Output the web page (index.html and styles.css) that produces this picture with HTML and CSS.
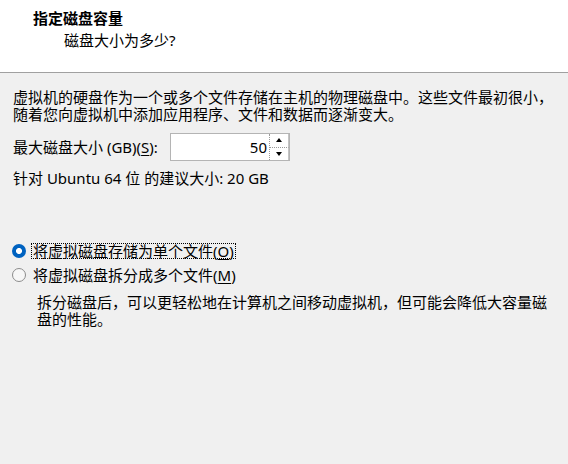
FILE: index.html
```html
<!DOCTYPE html>
<html lang="zh-CN">
<head>
<meta charset="utf-8">
<title>指定磁盘容量</title>
<link rel="stylesheet" href="styles.css">
</head>
<body>
<div class="header">
  <div class="title">指定磁盘容量</div>
  <div class="subtitle">磁盘大小为多少?</div>
</div>
<div class="content">
  <p class="intro">虚拟机的硬盘作为一个或多个文件存储在主机的物理磁盘中。这些文件最初很小，<br>随着您向虚拟机中添加应用程序、文件和数据而逐渐变大。</p>
  <div class="size-row">
    <label class="size-label">最大磁盘大小 (GB)(<u>S</u>):</label>
    <div class="spin">
      <span class="spin-value">50</span>
      <div class="spin-btns">
        <span class="spin-btn"><span class="arrow up"></span></span>
        <span class="spin-btn"><span class="arrow down"></span></span>
      </div>
    </div>
  </div>
  <p class="recommend">针对 Ubuntu 64 位 的建议大小: 20 GB</p>
  <div class="options">
    <div class="radio-row">
      <span class="radio checked"></span>
      <span class="radio-label focused">将虚拟磁盘存储为单个文件(<u>O</u>)</span>
    </div>
    <div class="radio-row second">
      <span class="radio"></span>
      <span class="radio-label">将虚拟磁盘拆分成多个文件(<u>M</u>)</span>
    </div>
    <p class="radio-desc">拆分磁盘后，可以更轻松地在计算机之间移动虚拟机，但可能会降低大容量磁<br>盘的性能。</p>
  </div>
</div>
</body>
</html>
```

FILE: styles.css
```css
html, body {
  margin: 0;
  padding: 0;
}
body {
  background: #f0f0f0;
  color: #000;
  font-family: "Noto Sans", "Noto Sans CJK SC", sans-serif;
  font-size: 15px;
  line-height: 17px;
  width: 568px;
  height: 464px;
  overflow: hidden;
}
u {
  text-decoration: underline;
  text-underline-offset: 2px;
}
.header {
  background: #fff;
  height: 72px;
  border-bottom: 1px solid #a0a0a0;
  box-sizing: border-box;
  height: 73px;
  padding-top: 10px;
}
.title {
  font-weight: bold;
  padding-left: 33px;
  line-height: 17px;
}
.subtitle {
  padding-left: 64px;
  margin-top: 5px;
  line-height: 17px;
}
.content {
  padding: 16px 0 0 13px;
}
.intro {
  margin: 0;
}
.size-row {
  display: flex;
  align-items: center;
  margin-top: 10px;
  height: 28px;
}
.size-label {
  width: 157px;
  padding-top: 1px;
}
.spin {
  display: flex;
  width: 120px;
  height: 28px;
  box-sizing: border-box;
  border: 1px solid #b4b4b4;
  background: #fff;
}
.spin-value {
  flex: 1;
  text-align: right;
  padding-right: 2px;
  line-height: 26px;
}
.spin-btns {
  display: flex;
  flex-direction: column;
  width: 19px;
  border-left: 1px dotted #9a9a9a;
}
.spin-btn {
  flex: 1;
  display: flex;
  align-items: center;
  justify-content: center;
  border-right: 1px solid #c4c4c4;
}
.spin-btn + .spin-btn {
  border-top: 1px dotted #9a9a9a;
}
.arrow {
  width: 0;
  height: 0;
  border-left: 3.5px solid transparent;
  border-right: 3.5px solid transparent;
}
.arrow.up {
  border-bottom: 4px solid #000;
}
.arrow.down {
  border-top: 4px solid #000;
}
.recommend {
  margin: 9px 0 0 0;
}
.options {
  margin-top: 55px;
}
.radio-row {
  display: flex;
  align-items: center;
  height: 17px;
}
.radio-row.second {
  margin-top: 7px;
}
.radio {
  width: 14px;
  height: 14px;
  box-sizing: border-box;
  border-radius: 50%;
  margin-left: -1px;
  margin-right: 5px;
  border: 1px solid #8c8c8c;
  background: #f7f7f7;
}
.radio.checked {
  border: none;
  background: radial-gradient(circle at center, #fff 0 2.6px, #0062c0 3.4px);
}
.radio-label {
  border: 1px dotted transparent;
  padding: 0 1px;
  line-height: 14px;
  height: 14px;
}
.radio-label.focused {
  border-color: #000;
}
.radio-desc {
  margin: 11px 0 0 24px;
}
```
